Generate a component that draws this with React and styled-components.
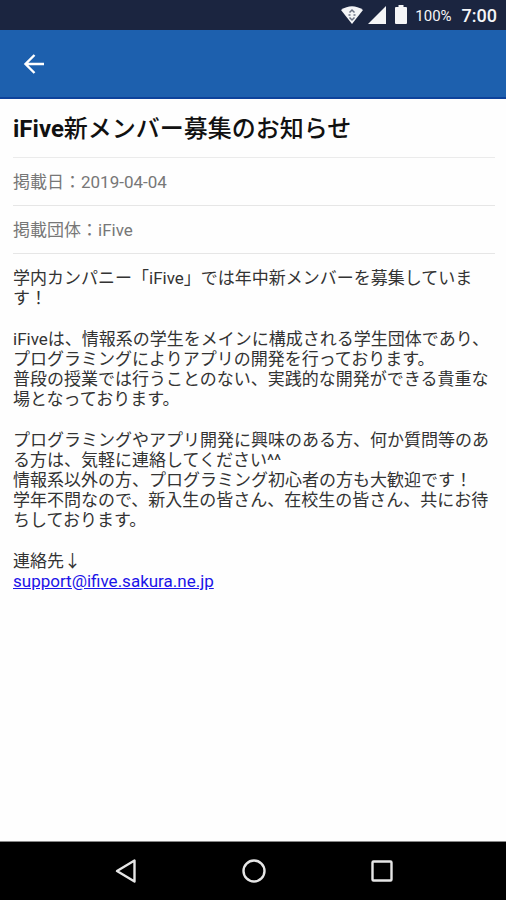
import React from 'react'
import styled, { createGlobalStyle } from 'styled-components'

const GlobalStyle = createGlobalStyle`
    * {
        box-sizing: border-box;
    }
    body {
        margin: 0;
        background: #fefefe;
        font-family: Roboto, 'Noto Sans CJK JP', sans-serif;
    }
`

const Screen = styled.div`
    display: flex;
    flex-direction: column;
    min-height: 100vh;
`

const StatusBar = styled.div`
    display: flex;
    align-items: center;
    justify-content: flex-end;
    height: 30px;
    padding-right: 9px;
    background: #1b2540;
    color: #f4f5f7;
`

const StatusIcon = styled.svg`
    width: ${props => props.$width}px;
    height: 20px;
    margin-right: ${props => props.$gap}px;
`

const Battery = styled.span`
    font-size: 15px;
    line-height: 18px;
    padding-top: 2px;
    margin-right: 10px;
`

const Clock = styled.span`
    font-size: 18px;
    font-weight: 500;
    line-height: 18px;
    padding-top: 2px;
`

const Header = styled.header`
    display: flex;
    align-items: center;
    height: 69px;
    padding: 0 14px;
    background: #1d60ae;
    border-bottom: 2px solid #0d429b;
`

const IconButton = styled.button`
    display: flex;
    align-items: center;
    justify-content: center;
    width: 40px;
    height: 40px;
    padding: 0;
    border: none;
    background: none;
    color: ${props => props.$color};
    cursor: pointer;
`

const Article = styled.main`
    flex: 1;
    padding: 0 11px 0 13px;
`

const Title = styled.h1`
    margin: 0;
    padding: 12px 0 10px;
    border-bottom: 1px solid #ebebeb;
    color: #111;
    font-size: 24px;
    font-weight: 500;
    line-height: 36px;
`

const Latin = styled.span`
    font-weight: 700;
`

const Info = styled.p`
    margin: 0;
    padding-top: 2px;
    border-bottom: 1px solid #e6e6e6;
    color: #777;
    font-size: 17px;
    line-height: 45px;
`

const Body = styled.div`
    padding: 14px 0;
    color: #333;
    font-size: 17px;
    line-height: 20px;
`

const Paragraph = styled.p`
    margin: 0 0 21px;
    white-space: pre-line;
`

const MailLink = styled.a`
    color: #1c14e8;
`

const NavBar = styled.nav`
    display: flex;
    align-items: center;
    justify-content: center;
    gap: 88px;
    height: 59px;
    padding-left: 2px;
    border-top: 1px solid #888;
    background: #000;
`

const paragraphs = [
    '学内カンパニー「iFive」では年中新メンバーを募集しています！',
    'iFiveは、情報系の学生をメインに構成される学生団体であり、プログラミングによりアプリの開発を行っております。\n普段の授業では行うことのない、実践的な開発ができる貴重な場となっております。',
    'プログラミングやアプリ開発に興味のある方、何か質問等のある方は、気軽に連絡してください^^\n情報系以外の方、プログラミング初心者の方も大歓迎です！\n学年不問なので、新入生の皆さん、在校生の皆さん、共にお待ちしております。',
]

function PhoneStatus() {
    return (
        <StatusBar>
            <StatusIcon $width={22} $gap={5} viewBox="0 0 22 20" aria-hidden="true">
                <path d="M0 5Q11-2.500 22 5L11 19Z" fill="currentColor" />
                <path d="M8.5 7.5 11 5l2.5 2.5M8.5 12.5 11 15l2.5-2.5M7.5 10h2M12.5 10h2" fill="none" stroke="#6d7484" strokeWidth="1.5" />
            </StatusIcon>
            <StatusIcon $width={18} $gap={9} viewBox="0 0 18 20" aria-hidden="true">
                <path d="M18 1v18H0Z" fill="currentColor" />
            </StatusIcon>
            <StatusIcon $width={12} $gap={8} viewBox="0 0 12 20" aria-hidden="true">
                <path d="M3.5 0h5v2H11q1 0 1 1v15q0 1-1 1H1q-1 0-1-1V3q0-1 1-1h2.5Z" fill="currentColor" />
            </StatusIcon>
            <Battery>100%</Battery>
            <Clock>7:00</Clock>
        </StatusBar>
    )
}

export default function App() {
    return (
        <Screen>
            <GlobalStyle />
            <PhoneStatus />
            <Header>
                <IconButton $color="#fff" aria-label="戻る">
                    <svg width="22" height="22" viewBox="0 0 22 22" fill="none" stroke="currentColor" strokeWidth="2.4">
                        <path d="M21 11H3M11.5 2l-9 9 9 9" />
                    </svg>
                </IconButton>
            </Header>
            <Article>
                <Title><Latin>iFive</Latin>新メンバー募集のお知らせ</Title>
                <Info>掲載日：2019-04-04</Info>
                <Info>掲載団体：iFive</Info>
                <Body>
                    {paragraphs.map(text => <Paragraph key={text}>{text}</Paragraph>)}
                    <Paragraph>
                        連絡先↓<br />
                        <MailLink href="mailto:support@ifive.sakura.ne.jp">support@ifive.sakura.ne.jp</MailLink>
                    </Paragraph>
                </Body>
            </Article>
            <NavBar>
                <IconButton $color="#e6e6e6" aria-label="Back">
                    <svg width="24" height="26" viewBox="0 0 24 26" fill="none" stroke="currentColor" strokeWidth="2.4" strokeLinejoin="round">
                        <path d="M20.5 2.5v21L3 13Z" />
                    </svg>
                </IconButton>
                <IconButton $color="#e6e6e6" aria-label="Home">
                    <svg width="24" height="24" viewBox="0 0 24 24" fill="none" stroke="currentColor" strokeWidth="2.4">
                        <circle cx="12" cy="12" r="10.5" />
                    </svg>
                </IconButton>
                <IconButton $color="#e6e6e6" aria-label="Recents">
                    <svg width="24" height="24" viewBox="0 0 24 24" fill="none" stroke="currentColor" strokeWidth="2.4">
                        <rect x="2.5" y="2.5" width="19" height="19" rx="1" />
                    </svg>
                </IconButton>
            </NavBar>
        </Screen>
    )
}
